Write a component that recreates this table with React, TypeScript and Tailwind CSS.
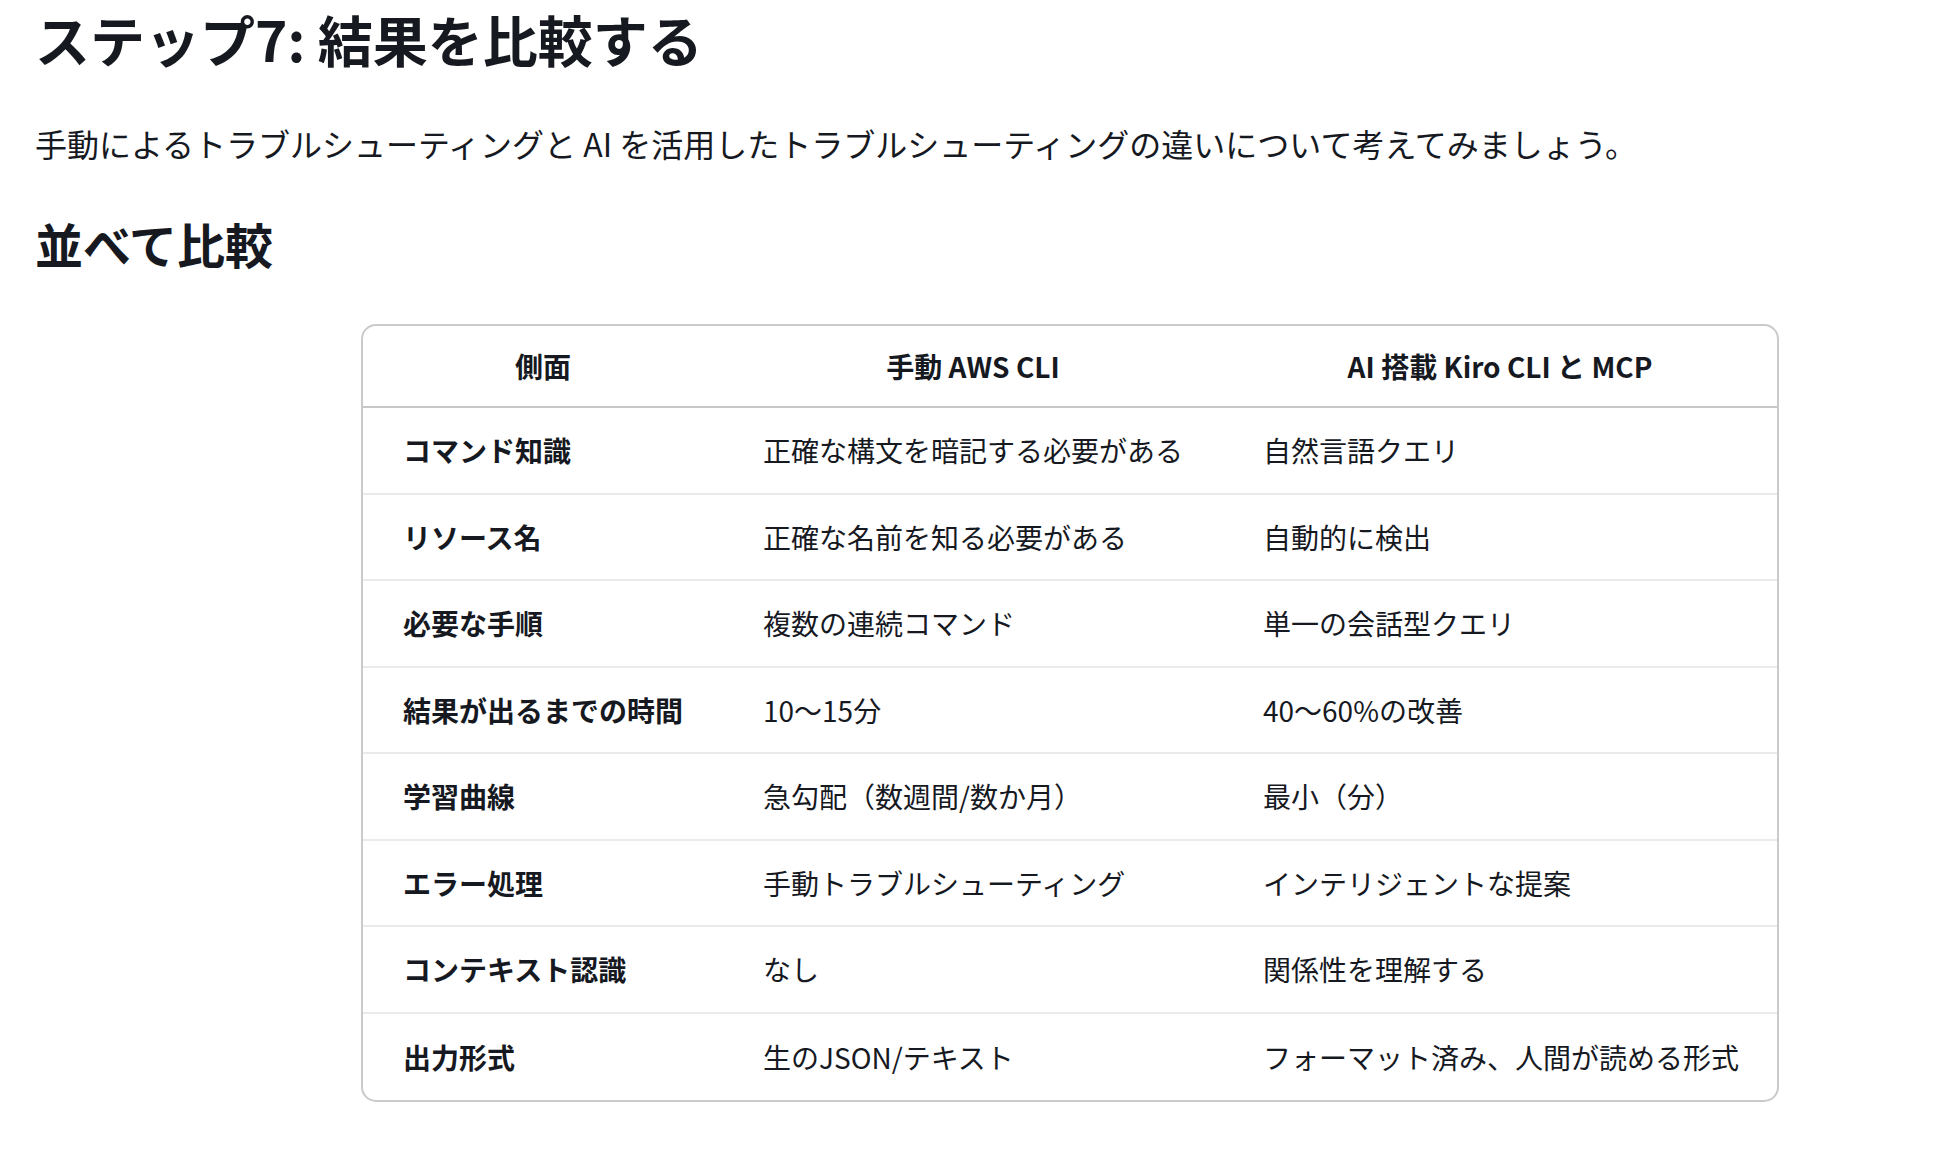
import React from 'react';

const rows: [string, string, string][] = [
  ['コマンド知識', '正確な構文を暗記する必要がある', '自然言語クエリ'],
  ['リソース名', '正確な名前を知る必要がある', '自動的に検出'],
  ['必要な手順', '複数の連続コマンド', '単一の会話型クエリ'],
  ['結果が出るまでの時間', '10〜15分', '40〜60%の改善'],
  ['学習曲線', '急勾配（数週間/数か月）', '最小（分）'],
  ['エラー処理', '手動トラブルシューティング', 'インテリジェントな提案'],
  ['コンテキスト認識', 'なし', '関係性を理解する'],
  ['出力形式', '生のJSON/テキスト', 'フォーマット済み、人間が読める形式'],
];

export default function App() {
  return (
    <div
      className="min-h-[1150px] w-full bg-white pl-[35px] text-[#16191f]"
      style={{ fontFamily: '"Noto Sans CJK JP", "Noto Sans", sans-serif' }}
    >
      <h1 className="text-[55px] font-bold leading-[77px]">ステップ7: 結果を比較する</h1>
      <p className="mt-[42px] text-[32px] leading-[48px]">
        手動によるトラブルシューティングと AI を活用したトラブルシューティングの違いについて考えてみましょう。
      </p>
      <h2 className="mt-[48px] text-[48px] font-bold leading-[56px]">並べて比較</h2>

      <div className="ml-[326px] mt-[53px] w-[1418px] overflow-hidden rounded-[15px] border-2 border-[#cacaca]">
        <div className="grid h-[82px] grid-cols-[360px_500px_1fr] items-center border-b-2 border-[#c8c8c8] text-[28px] font-bold">
          <div className="text-center">側面</div>
          <div className="text-center">手動 AWS CLI</div>
          <div className="text-center">AI 搭載 Kiro CLI と MCP</div>
        </div>
        {rows.map((r, i) => (
          <div
            key={r[0]}
            className={`grid h-[86.5px] grid-cols-[360px_500px_1fr] items-center text-[28px] ${
              i < rows.length - 1 ? 'border-b-2 border-[#ebebeb]' : ''
            }`}
          >
            <div className="pl-[40px] font-bold">{r[0]}</div>
            <div className="pl-[40px]">{r[1]}</div>
            <div className="pl-[40px]">{r[2]}</div>
          </div>
        ))}
      </div>
    </div>
  );
}
